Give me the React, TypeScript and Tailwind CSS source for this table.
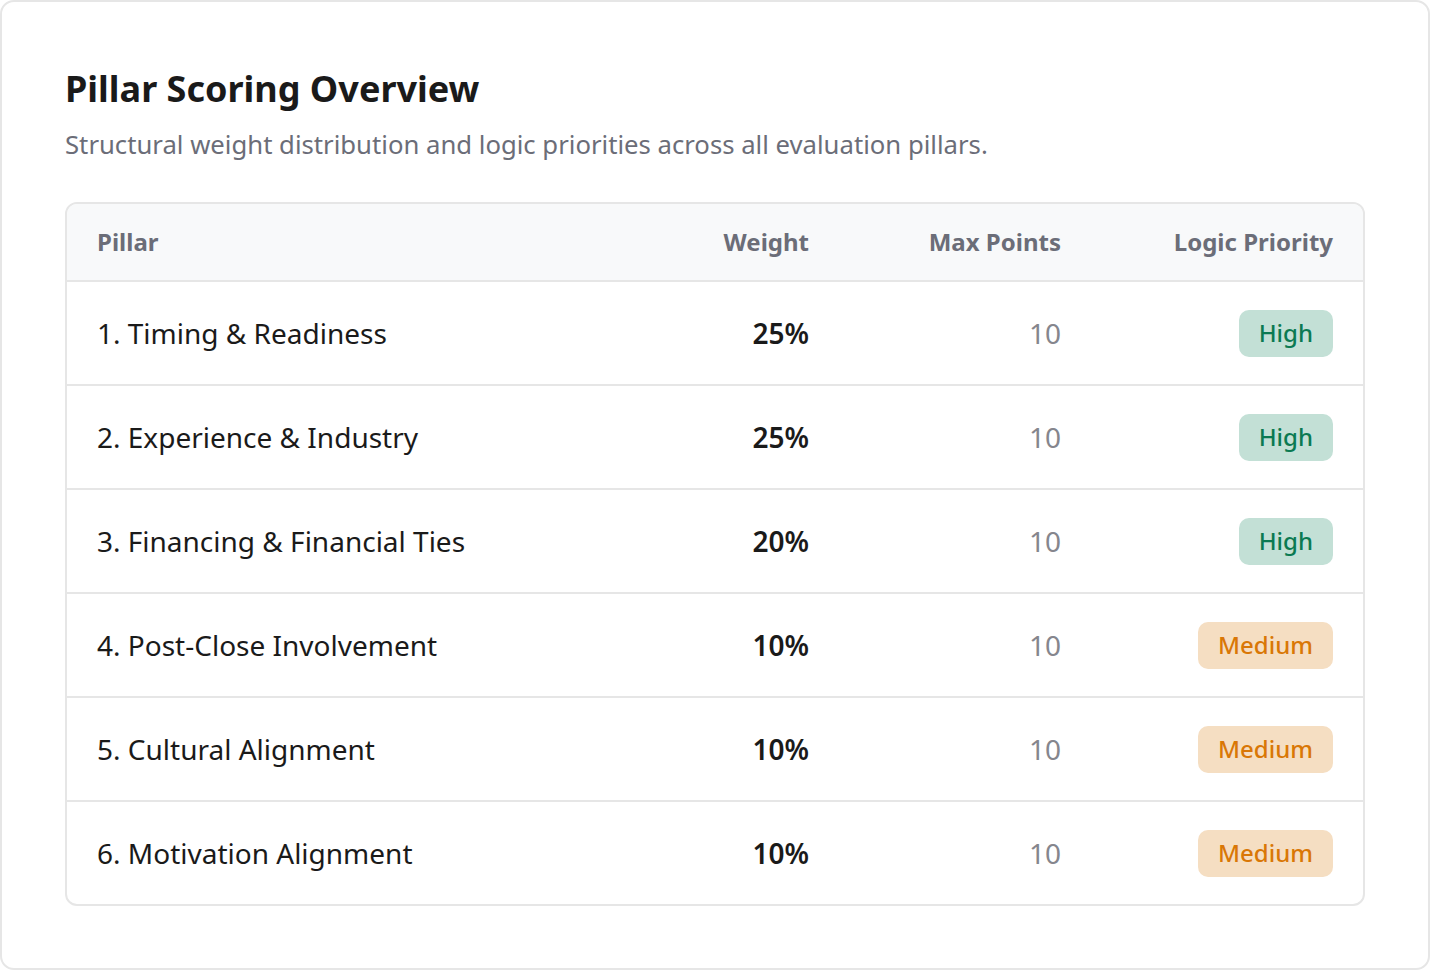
const rows = [
  { name: "1. Timing & Readiness", weight: "25%", max: 10, priority: "High" },
  { name: "2. Experience & Industry", weight: "25%", max: 10, priority: "High" },
  { name: "3. Financing & Financial Ties", weight: "20%", max: 10, priority: "High" },
  { name: "4. Post-Close Involvement", weight: "10%", max: 10, priority: "Medium" },
  { name: "5. Cultural Alignment", weight: "10%", max: 10, priority: "Medium" },
  { name: "6. Motivation Alignment", weight: "10%", max: 10, priority: "Medium" },
];

function PriorityBadge({ level }: { level: string }) {
  const high = level === "High";
  return (
    <span
      className={
        high
          ? "inline-flex h-[47px] items-center rounded-[10px] bg-[#c3e0d6] px-5 text-[24px] font-medium text-[#0b7a52]"
          : "inline-flex h-[47px] items-center rounded-[10px] bg-[#f5dec2] px-5 text-[24px] font-medium text-[#d97706]"
      }
    >
      {level}
    </span>
  );
}

export default function App() {
  return (
    <div
      className="h-[970px] w-[1430px] bg-white"
      style={{ fontFamily: '"Noto Sans", "Open Sans", sans-serif' }}
    >
      <div className="flex h-full flex-col rounded-[14px] border-2 border-[#e6e6e6] bg-white px-[63px] pt-[63px]">
        <h1 className="text-[36px] font-bold leading-[48px] text-[#1a1a1a]">
          Pillar Scoring Overview
        </h1>
        <p className="mt-[14px] text-[25.7px] leading-[36px] text-[#6b6d78]">
          Structural weight distribution and logic priorities across all evaluation pillars.
        </p>

        <div className="mt-[39px] overflow-hidden rounded-[12px] border-2 border-[#e6e6e6]">
          <div className="grid h-[78px] grid-cols-[1fr_200px_252px_272px] items-center border-b-2 border-[#e6e6e6] bg-[#f8f9fa] px-[30px] text-[24px] font-bold text-[#6b6d78]">
            <div>Pillar</div>
            <div className="text-right">Weight</div>
            <div className="text-right">Max Points</div>
            <div className="text-right">Logic Priority</div>
          </div>
          {rows.map((r, i) => (
            <div
              key={r.name}
              className={
                i < rows.length - 1
                  ? "grid h-[104px] grid-cols-[1fr_200px_252px_272px] items-center border-b-2 border-[#e6e6e6] px-[30px]"
                  : "grid h-[102px] grid-cols-[1fr_200px_252px_272px] items-center px-[30px]"
              }
            >
              <div className="text-[28px] font-[450] text-[#1a1a1a]">{r.name}</div>
              <div className="text-right text-[28px] font-semibold text-[#1a1a1a]">{r.weight}</div>
              <div className="text-right text-[28px] text-[#85868d]">{r.max}</div>
              <div className="text-right">
                <PriorityBadge level={r.priority} />
              </div>
            </div>
          ))}
        </div>
      </div>
    </div>
  );
}
